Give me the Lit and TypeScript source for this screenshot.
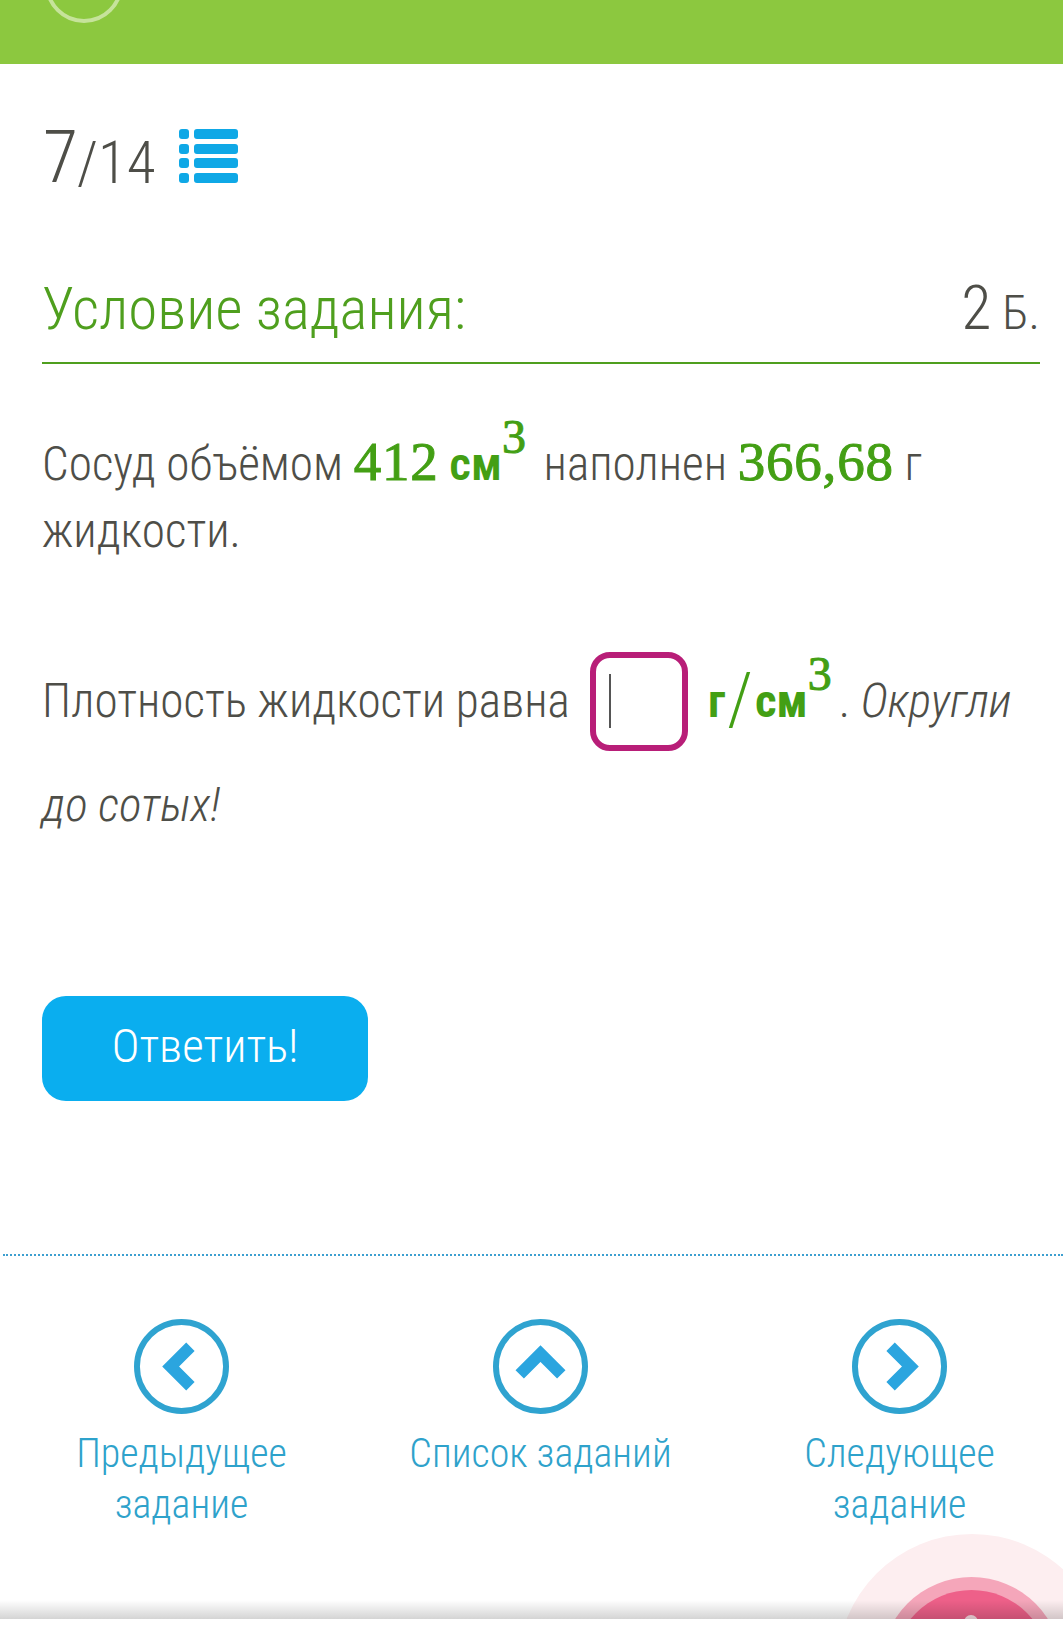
import { LitElement, css, html } from 'lit'

class AppRoot extends LitElement {
  static styles = css`
    :host {
      display: block;
      position: relative;
      width: 1063px;
      height: 1632px;
      overflow: hidden;
      background: #fff;
      color: #4e4e48;
      font-family: Roboto, "Liberation Sans Narrow", sans-serif;
      font-weight: 300;
      font-stretch: 75%;
    }
    .topbar {
      height: 64px;
      background: #8cc83f;
      overflow: hidden;
    }
    .topbar svg { display: block; margin-left: 44px; }
    .counter {
      display: flex;
      align-items: flex-start;
      margin: 60px 0 0 43px;
      height: 68px;
    }
    .counter .cur { font-size: 72px; line-height: 68px; }
    .counter .total { font-size: 59px; line-height: 68px; margin-left: -1px; margin-top: 5px; }
    .counter svg { margin: 5px 0 0 24px; }
    .head {
      display: flex;
      justify-content: space-between;
      align-items: baseline;
      margin: 70px 23px 0 42px;
      height: 102px;
      border-bottom: 2px solid #4f9f1e;
      box-sizing: border-box;
    }
    .head .title { font-size: 59px; line-height: 94px; color: #4f9f1e; }
    .head .pts { font-size: 48px; }
    .head .pts b { font-weight: 300; font-size: 62px; }
    .task { margin: 0 23px 0 42px; font-size: 47.25px; }
    .task .first { margin-top: 64px; line-height: 67px; }
    .task .second { margin-top: 84px; line-height: 104px; }
    .num {
      font-family: "Liberation Serif", serif;
      font-weight: 400;
      font-stretch: normal;
      font-size: 55px;
      letter-spacing: 0.8px;
      color: #439f14;
      -webkit-text-stroke: 1px #439f14;
    }
    .unit { font-weight: 600; color: #439f14; font-size: 47px; }
    .unit.strong { font-weight: 700; }
    .slash {
      font-weight: 300;
      color: #439f14;
      font-size: 72px;
      margin: 0 2px;
      line-height: 0;
      vertical-align: -7px;
    }
    sup {
      font-family: "Liberation Serif", serif;
      font-weight: 400;
      font-stretch: normal;
      font-size: 48px;
      color: #439f14;
      -webkit-text-stroke: 1px #439f14;
      line-height: 0;
      vertical-align: 27px;
      margin-right: 7px;
    }
    .box {
      display: inline-block;
      overflow: hidden;
      box-sizing: border-box;
      width: 98px;
      height: 99px;
      margin: 0 20px;
      padding: 16px 0 0 13px;
      border: 6px solid #b81e78;
      border-radius: 20px;
      vertical-align: -34px;
    }
    .box i { display: block; width: 2px; height: 54px; background: #555; }
    em { font-style: italic; }
    .answer {
      display: block;
      width: 326px;
      height: 105px;
      margin: 139px 0 0 42px;
      padding: 0 0 6px;
      border: 0;
      border-radius: 24px;
      background: #0aaeef;
      color: #fff;
      font: inherit;
      font-size: 47px;
      font-weight: 300;
    }
    .sep {
      margin: 153px 0 0 3px;
      border-top: 2px dotted #3d9fd0;
    }
    .nav {
      display: grid;
      grid-template-columns: repeat(3, 359px);
      margin: 63px 0 0 2px;
      color: #2ea2cb;
      font-size: 40px;
      line-height: 51px;
      text-align: center;
    }
    .nav a { display: block; }
    .nav svg { display: block; margin: 0 auto 14px; }
    .ring { position: absolute; border-radius: 50%; }
    .r1 { left: 837px; top: 1534px; width: 270px; height: 270px; background: #fdeef0; }
    .r2 { left: 881px; top: 1577px; width: 181px; height: 181px; background: #f5a6ba; }
    .r3 { left: 893px; top: 1590px; width: 157px; height: 157px; background: #ee6089; }
    .dot { left: 964px; top: 1615px; width: 14px; height: 14px; background: #fbdde4; }
    .shade {
      position: absolute;
      left: 0; right: 0;
      top: 1600px;
      height: 19px;
      background: linear-gradient(rgba(0, 0, 0, 0), rgba(0, 0, 0, 0.17));
    }
    .bottom {
      position: absolute;
      left: 0; right: 0;
      top: 1619px;
      bottom: 0;
      background: #fff;
    }
  `

  chevron(d: string) {
    return html`<svg width="95" height="95" viewBox="0 0 96 96" fill="none">
      <circle cx="48" cy="48" r="45" stroke="#2fa3d0" stroke-width="6"/>
      <path d="${d}" stroke="#2ba5df" stroke-width="12"/>
    </svg>`
  }

  render() {
    return html`
      <div class="ring r1"></div>
      <div class="ring r2"></div>
      <div class="ring r3"></div>
      <div class="ring dot"></div>
      <div class="shade"></div>
      <div class="bottom"></div>

      <div class="topbar">
        <svg width="80" height="24" viewBox="0 0 80 24" fill="none">
          <circle cx="40" cy="-16" r="37" stroke="#c6e39b" stroke-width="4"/>
        </svg>
      </div>

      <div class="counter">
        <span class="cur">7</span><span class="total">/14</span>
        <svg width="60" height="55" viewBox="0 0 60 55" fill="#0fa8e6">
          <rect x="0" y="0" width="10" height="10" rx="3"/><rect x="15" y="0" width="44" height="10" rx="3"/>
          <rect x="0" y="15" width="10" height="10" rx="3"/><rect x="15" y="15" width="44" height="10" rx="3"/>
          <rect x="0" y="29" width="10" height="10" rx="3"/><rect x="15" y="29" width="44" height="10" rx="3"/>
          <rect x="0" y="44" width="10" height="10" rx="3"/><rect x="15" y="44" width="44" height="10" rx="3"/>
        </svg>
      </div>

      <div class="head">
        <span class="title">Условие задания:</span>
        <span class="pts"><b>2</b> Б.</span>
      </div>

      <div class="task">
        <div class="first">Сосуд объёмом <span class="num">412</span> <span class="unit">см</span><sup>3</sup> наполнен <span class="num">366,68</span> г жидкости.</div>
        <div class="second">Плотность жидкости равна<span class="box"><i></i></span><span class="unit strong">г</span><span class="slash">/</span><span class="unit strong">см</span><sup>3</sup>. <em>Округли до сотых!</em></div>
      </div>

      <button class="answer">Ответить!</button>

      <div class="sep"></div>

      <div class="nav">
        <a>${this.chevron('M57 28L37 48L57 68')}Предыдущее<br>задание</a>
        <a>${this.chevron('M27 56L48 35L69 56')}Список заданий</a>
        <a>${this.chevron('M39 28L59 48L39 68')}Следующее<br>задание</a>
      </div>
    `
  }
}

customElements.define('app-root', AppRoot)
